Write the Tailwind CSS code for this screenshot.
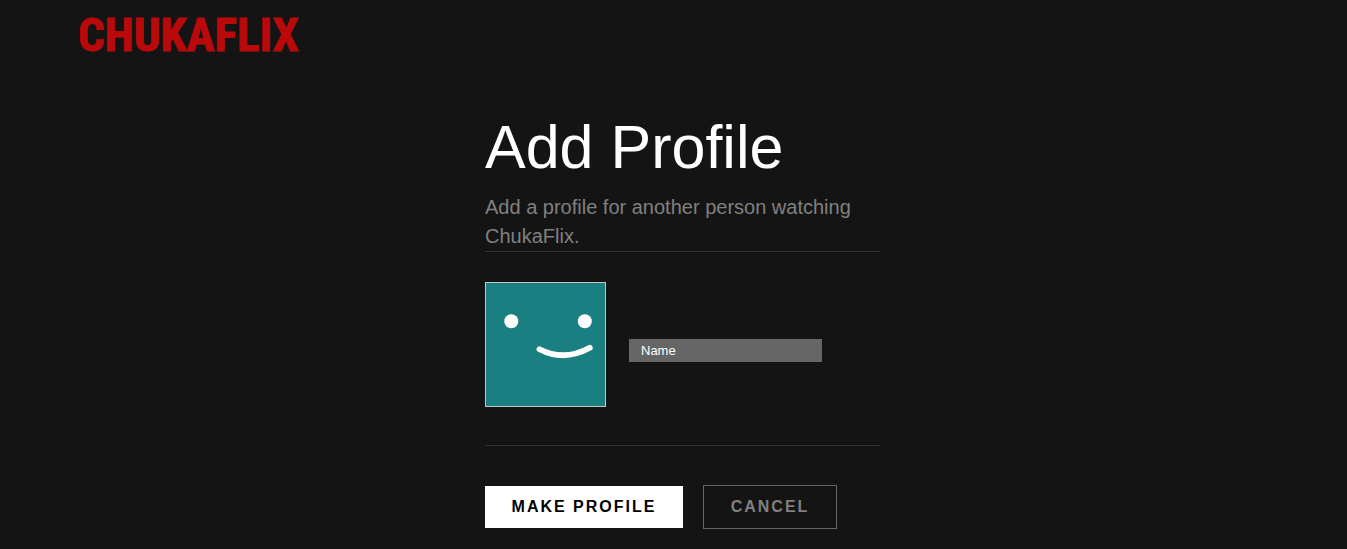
<!DOCTYPE html>
<html lang="en">
<head>
<meta charset="utf-8">
<meta name="viewport" content="width=device-width, initial-scale=1">
<title>ChukaFlix</title>
<script src="https://cdn.jsdelivr.net/npm/@tailwindcss/browser@4"></script>
</head>
<body class="min-h-screen bg-[#141414] font-['Liberation_Sans',Arial,sans-serif] text-white">
<header class="flex h-[72px] items-center px-5 md:px-[78px]">
  <a href="#" aria-label="ChukaFlix home" class="block">
    <svg class="block h-[60px] w-[240px]" viewBox="0 0 240 60" role="img" aria-label="CHUKAFLIX">
      <text y="45" fill="#b9090b" stroke="#b9090b" stroke-width="1" font-size="47" font-weight="700" font-family="'Liberation Sans Narrow','Roboto Condensed','Open Sans Condensed',Roboto,sans-serif">CHUKAFLIX</text>
    </svg>
  </a>
</header>
<main class="mx-auto max-w-[413px] pt-10 pl-[18px]">
  <h1 class="text-[61px] leading-[70px]">Add Profile</h1>
  <p class="mt-[11px] border-b border-[#333] text-xl leading-[29px] text-[#808080]">Add a profile for another person watching ChukaFlix.</p>
  <form>
    <div class="flex items-center gap-[23px] border-b border-[#333] pt-[30px] pb-[38px]">
      <svg class="block h-[125px] w-[121px] shrink-0 border border-[#c4c4c4] bg-[#1a7f80]" viewBox="0 0 119 123" aria-hidden="true">
        <circle cx="25.3" cy="38.2" r="7" fill="#fff"/>
        <circle cx="98.8" cy="38.2" r="7" fill="#fff"/>
        <path d="M53.5 66.2Q78 79 103.8 64.8" fill="none" stroke="#fff" stroke-width="5.8" stroke-linecap="round"/>
      </svg>
      <input type="text" aria-label="Name" placeholder="Name" class="mt-3 h-[23px] w-[193px] min-w-0 bg-[#666] px-3 text-[13px] text-white outline-none placeholder:text-white">
    </div>
    <div class="flex items-center gap-5 pt-[39px] pb-5">
      <button type="submit" class="h-[42px] min-w-[198px] bg-white px-[26px] text-base font-bold tracking-[2px] whitespace-nowrap text-black">MAKE PROFILE</button>
      <button type="button" class="h-11 min-w-[134px] border border-[#666] px-[26px] text-base font-bold tracking-[2px] whitespace-nowrap text-[#808080]">CANCEL</button>
    </div>
  </form>
</main>
</body>
</html>
